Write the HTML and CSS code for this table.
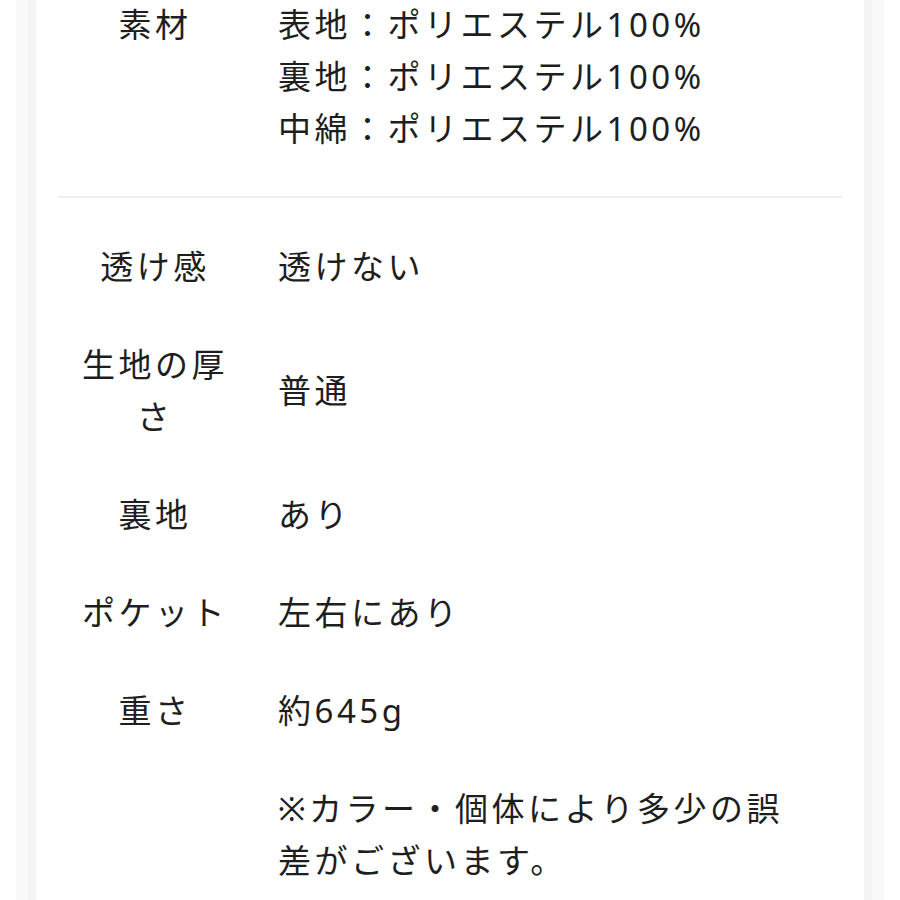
FILE: index.html
```html
<!DOCTYPE html>
<html lang="ja">
<head>
<meta charset="utf-8">
<link rel="stylesheet" href="styles.css">
</head>
<body>
<div class="frame">
  <div class="card">
    <div class="spec">
      <div class="row">
        <div class="label">素材</div>
        <div class="value top">表地：ポリエステル100%<br>裏地：ポリエステル100%<br>中綿：ポリエステル100%</div>
      </div>
    </div>
    <hr class="divider">
    <div class="spec">
      <div class="row">
        <div class="label">透け感</div>
        <div class="value">透けない</div>
      </div>
      <div class="row">
        <div class="label">生地の厚さ</div>
        <div class="value">普通</div>
      </div>
      <div class="row">
        <div class="label">裏地</div>
        <div class="value">あり</div>
      </div>
      <div class="row">
        <div class="label">ポケット</div>
        <div class="value">左右にあり</div>
      </div>
      <div class="row">
        <div class="label">重さ</div>
        <div class="value">約645g</div>
      </div>
      <div class="row">
        <div class="label"></div>
        <div class="value">※カラー・個体により多少の誤差がございます。</div>
      </div>
    </div>
  </div>
</div>
</body>
</html>
```
FILE: styles.css
```css
html, body {
  margin: 0;
  padding: 0;
  background: #ffffff;
}
body {
  font-family: "Noto Sans", "Noto Sans CJK JP", sans-serif;
  color: #1e1e1e;
  overflow: hidden;
}
.frame {
  margin: 0 16px;
  padding: 0 12px;
  background: #f9f9f9;
  min-height: 1000px;
}
.card {
  background: #ffffff;
  border-left: 8px solid #f4f4f4;
  border-right: 8px solid #f4f4f4;
  padding: 0 22px;
  min-height: 1000px;
  margin-top: -24px;
}
.spec {
  display: flex;
  flex-direction: column;
}
.row {
  display: grid;
  grid-template-columns: 150px 1fr;
  column-gap: 48px;
  padding: 23px 40px 23px 22px;
  font-size: 33px;
  letter-spacing: 3.5px;
  line-height: 52px;
}
.label {
  text-align: center;
  align-self: start;
}
.value {
  align-self: center;
}
.value.top {
  align-self: start;
}
.divider {
  border: 0;
  height: 2px;
  background: #efefef;
  margin: 18px 0 20px;
}
```
